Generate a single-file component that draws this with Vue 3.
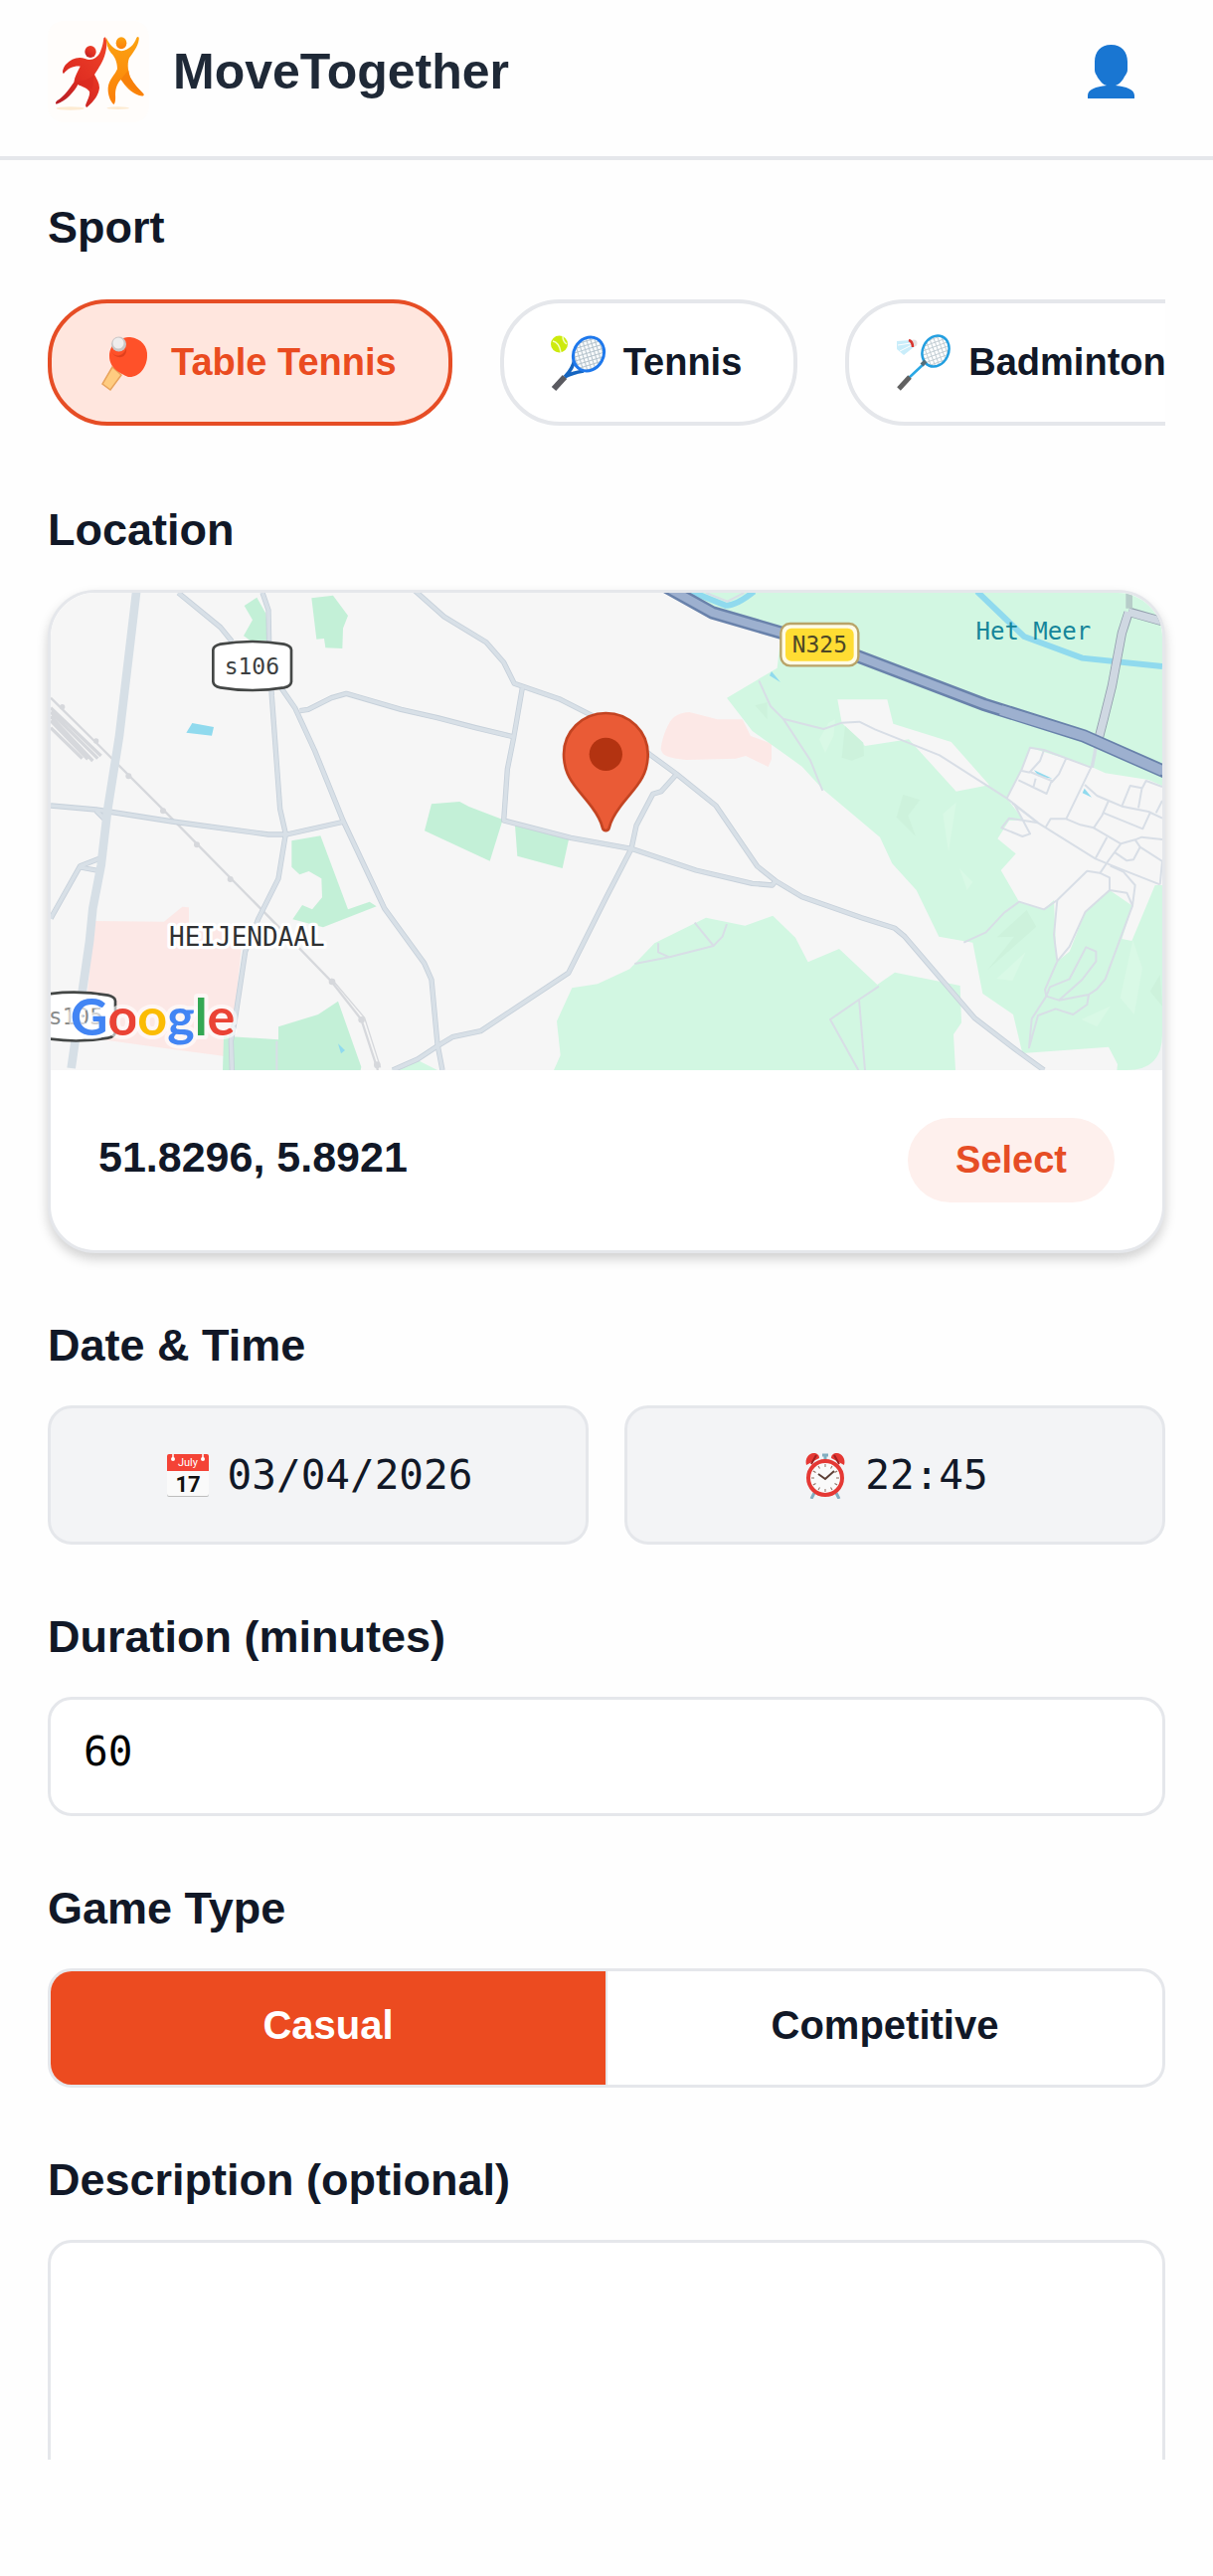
<script setup>
  import { ref } from 'vue'

  const sports = [
    { id: 'table-tennis', name: 'Table Tennis' },
    { id: 'tennis', name: 'Tennis' },
    { id: 'badminton', name: 'Badminton' }
  ]
  const gameTypes = ['Casual', 'Competitive']

  const sport = ref('table-tennis')
  const gameType = ref('Casual')
  const duration = ref('60')
  const description = ref('')
  const date = ref('03/04/2026')
  const time = ref('22:45')
  const coords = ref('51.8296, 5.8921')

  const clockTicks = [0, 30, 60, 90, 120, 150, 180, 210, 240, 270, 300, 330]
</script>

<template>
  <div class="app">
    <header class="header">
      <svg class="header__logo" viewBox="24 3 306 306" aria-hidden="true">
        <defs>
          <linearGradient id="logoRed" x1="1" y1="0" x2="0.2" y2="1">
            <stop offset="0" stop-color="#f0442a" />
            <stop offset="0.6" stop-color="#e02f22" />
            <stop offset="1" stop-color="#b91f25" />
          </linearGradient>
          <linearGradient id="logoOrange" x1="0" y1="0" x2="0" y2="1">
            <stop offset="0" stop-color="#fca311" />
            <stop offset="1" stop-color="#fb7f0a" />
          </linearGradient>
        </defs>
        <rect x="24" y="3" width="306" height="306" rx="48" fill="#fffdfb" />
        <ellipse cx="92" cy="267" rx="42" ry="5" fill="#fdebd2" />
        <ellipse cx="236" cy="266" rx="34" ry="4" fill="#fdebd2" />
        <ellipse cx="153" cy="96" rx="17" ry="18" fill="url(#logoRed)" />
        <path fill="url(#logoRed)" d="M197 52C204 60 203 80 198 100C192 125 178 145 165 165C172 178 180 190 180 205C178 225 165 245 143 263C138 264 137 258 140 252C146 238 152 225 150 216C142 205 125 200 115 195C105 215 80 245 50 254C46 252 48 248 52 244C75 230 90 205 103 188C105 170 115 155 122 140C105 138 85 145 72 162C66 160 70 145 78 135C95 117 115 110 137 117C155 125 175 115 183 95C190 80 192 65 193 55Z" />
        <ellipse cx="246" cy="70" rx="16" ry="18" fill="url(#logoOrange)" />
        <path fill="url(#logoOrange)" d="M200 52C208 72 222 90 246 94C270 90 285 75 292 54C296 48 301 52 299 60C296 82 280 100 270 115C262 135 268 160 274 175C285 195 300 210 314 224C316 230 308 230 300 228C275 220 258 200 245 180C235 190 228 205 228 225C229 240 228 252 223 255C212 245 205 225 206 205C208 180 228 165 234 148C234 125 225 110 215 100C205 88 200 70 200 52Z" />
        <path fill="#d92a20" opacity="0.6" d="M103 188C118 192 140 196 156 208C166 192 158 176 165 165C150 180 125 186 103 188Z" />
        <path fill="#f57c0a" opacity="0.7" d="M245 180C252 168 262 158 268 152C269 162 272 170 274 175C285 195 300 210 314 224C285 215 262 198 245 180Z" />
      </svg>
      <h1 class="header__title">MoveTogether</h1>
      <button class="header__user" type="button" aria-label="Profile">
        <svg class="header__user-icon" viewBox="0 0 47 54">
          <path fill="#1976d2" d="M23.5 0C34 0 40 7 40 17V25C40 29 37 31 36 34C33 38 31 40 28 41C39 42 47 45 47 51V54H0V51C0 45 8 42 19 41C15 40 13 37 10 33C9 30 7 29 7 25V17C7 7 13 0 23.5 0Z" />
        </svg>
      </button>
    </header>

    <main class="form">
      <section class="field">
        <h2 class="field__label">Sport</h2>
        <div class="chips">
          <button
            v-for="s in sports" :key="s.id"
            class="chip" :class="{ 'chip--active': sport === s.id }"
            type="button"
            :aria-pressed="sport === s.id"
            @click="sport = s.id"
            >
            <svg v-if="s.id === 'table-tennis'" class="chip__icon" viewBox="0 0 58 58" aria-hidden="true">
              <path d="M15 33L24 41L13 56L5 50Z" fill="#ffcc80" stroke="#e8a35c" stroke-width="1.5" />
              <path d="M31 43C22 39 12 34 12 22C12 10 22 3 33 3C44 4 51 13 50 22C50 33 42 44 31 43Z" fill="#ff5129" />
              <path d="M14 14C14 24 26 24 29 14C30 20 26 24 21 23C16 22 14 18 14 14Z" fill="#e0401d" />
              <circle cx="21.5" cy="10" r="7.5" fill="#c9c6c6" />
              <circle cx="21" cy="9" r="5.5" fill="#efeded" />
            </svg>
            <svg v-else-if="s.id === 'tennis'" class="chip__icon" viewBox="0 0 58 58" aria-hidden="true">
              <defs>
                <pattern id="strings" width="4" height="4" patternUnits="userSpaceOnUse" patternTransform="rotate(45)">
                  <path d="M0 0H4M0 0V4" stroke="#b5c3cc" stroke-width="2" />
                </pattern>
              </defs>
              <circle cx="9.5" cy="10" r="8.5" fill="#cdea0c" />
              <path d="M3 7C8 8 10 12 11 18M13 2C13 6 14 8 17 10" fill="none" stroke="#f4ffc0" stroke-width="1.5" />
              <path d="M25 24C24 32 20 38 15 43C22 39 28 38 34 37" fill="none" stroke="#1565c0" stroke-width="3.5" />
              <ellipse cx="39" cy="20" rx="15" ry="17.5" transform="rotate(28 39 20)" fill="#f8fafb" />
              <ellipse cx="39" cy="20" rx="15" ry="17.5" transform="rotate(28 39 20)" fill="url(#strings)" stroke="#1e78ec" stroke-width="3" />
              <path d="M15 43L4 55" stroke="#5a5a60" stroke-width="6" />
            </svg>
            <svg v-else class="chip__icon" viewBox="0 0 58 58" aria-hidden="true">
              <defs>
                <pattern id="badmintonStrings" width="4" height="4" patternUnits="userSpaceOnUse" patternTransform="rotate(45)">
                  <path d="M0 0H4M0 0V4" stroke="#c3ced4" stroke-width="2" />
                </pattern>
              </defs>
              <path d="M2 7L16 6L19 13L9 21L2 15Z" fill="#c9edfa" />
              <path d="M3 11L16 9M5 17L17 11" stroke="#fff" />
              <circle cx="19" cy="9" r="3.5" fill="#e4dfdf" />
              <path d="M14 6C17 7 18 10 18 13" fill="none" stroke="#d8352e" stroke-width="2.5" />
              <ellipse cx="41" cy="17" rx="13" ry="16" transform="rotate(25 41 17)" fill="url(#badmintonStrings)" stroke="#239fe0" stroke-width="2.5" />
              <path d="M29 30L14 44" stroke="#29a7e4" stroke-width="2.5" />
              <path d="M31 27L27 31" stroke="#546e7a" stroke-width="4" />
              <path d="M15 43L4 55" stroke="#616161" stroke-width="5" />
            </svg>
            <span>{{ s.name }}</span>
          </button>
        </div>
      </section>

      <section class="field">
        <h2 class="field__label">Location</h2>
        <div class="card">
          <svg class="map" viewBox="33 48 3354 1440" preserveAspectRatio="xMidYMid slice" role="img" aria-label="Map">
            <rect x="33" y="48" width="3354" height="1440" fill="#f6f6f6" />

            <!-- hospital and campus areas -->
            <g fill="#fce8e6">
              <path d="M165 1038L375 1040L430 995L450 997V1045L530 1060L610 1100L575 1448L400 1425L145 1390V1240Z" />
              <path d="M1960 408C1920 410 1905 430 1900 440C1885 465 1875 500 1874 520C1880 540 1890 545 1950 552L2100 548L2130 540L2198 573L2208 550V503L2145 480L2120 430H2045Z" />
            </g>

            <!-- parks -->
            <g fill="#c3f0d7">
              <path d="M655 62L617 87L642 130L615 178L635 192H690L682 110Z" />
              <path d="M820 64L885 56L930 117L915 155L913 216L862 214L858 186L835 188Z" />
              <path d="M760 796L847 781L930 1003L995 980L1016 994L855 1057L763 1033L792 990L822 1003L852 967L850 910L812 888L784 898L760 875Z" />
              <path d="M552 1488L555 1385L720 1396V1357L840 1320L900 1280L970 1478L968 1488Z" />
              <path d="M1182 685L1267 678L1295 693L1397 732L1358 857L1161 766Z" />
              <path d="M1434 750L1596 792L1577 879L1441 842Z" />
            </g>
            <g fill="#d2f7e2">
              <path d="M1060 1488L1145 1460L1200 1488Z" />
              <path d="M2010 1028L2128 1052L2212 1022L2280 1088L2318 1162L2412 1122L2527 1230L2580 1193L2777 1233L2781 1345L2757 1380L2763 1488H1551L1571 1443L1560 1340L1606 1240L1683 1228L1780 1183L1855 1105Z" />
              <path d="M1940 48L2235 185L2225 275L2073 365L2150 465L2300 572L2362 640L2535 785L2572 865L2645 945L2713 1085L2815 1103L2845 1257L2937 1320L2965 1437L3225 1418L3252 1470L3250 1488H3387V930H3365L3295 1098L3265 1092L3297 992L3228 945L3155 1010L3107 1130L3068 1162L3060 975L3030 1003L2955 980L2900 885L2945 835L2890 790L2925 735H2970L2918 668L2965 580L2988 515L3172 572L3215 592L3345 612L3387 630V48Z" />
            </g>
            <path fill="#f6f6f6" d="M2407 370H2557L2575 443L2750 498L2865 628L2765 647L2622 490L2490 510L2420 440Z" />
            <path fill="#f1f3f4" d="M3387 1380Q3387 1488 3280 1488H3387Z" />
            <g fill="#cdf2dc">
              <path d="M2430 450L2485 500L2487 540L2450 554L2420 545Z" />
              <path d="M2605 657L2656 673L2620 720L2643 782L2585 725Z" />
              <path d="M2978 1005L3007 1055L2860 1185L2940 1085L2888 1087Z" />
              <path d="M3380 1200L3387 1295L3350 1250Z" />
              <path d="M2158 388L2195 378V430Z" />
            </g>
            <g fill="#d9f9e6">
              <path d="M2765 680L2742 830L2725 715Z" />
              <path d="M2775 880L2815 920L2798 945Z" />
              <path d="M2975 1132L2935 1218L2887 1212Z" />
              <path d="M3298 1095L3327 1180L3302 1320L3260 1270Z" />
              <path d="M3230 1295L3190 1357L3142 1335Z" />
              <path d="M2380 440L2400 430L2395 480L2370 530L2352 490Z" />
            </g>

            <!-- water -->
            <g fill="#90daee">
              <path d="M460 441L525 453L519 479L442 470Z" />
              <path d="M900 1408L921 1428L909 1438Z" />
              <path d="M2208 285L2235 318L2202 298Z" />
              <path d="M3000 583L3055 608L3015 602Z" />
              <path d="M3152 638L3174 665L3146 652Z" />
            </g>
            <g fill="none" stroke="#90daee" stroke-width="18">
              <path d="M2828 44L2970 180L3145 245L3387 270" />
              <path d="M1965 44L2070 86Q2100 88 2155 44" />
            </g>

            <!-- railway -->
            <g fill="none" stroke="#d6d8dc" stroke-width="7">
              <path d="M33 365L180 510L380 710L720 1055L880 1220L970 1335L1020 1488" />
              <path d="M880 1212L980 1330L1028 1480" stroke-width="4" />
              <path d="M33 395L185 540M33 408L175 548M33 421L160 555M33 434L145 550M33 455L128 548" stroke-width="10" />
            </g>
            <g fill="#d6d8dc">
              <circle cx="68" cy="392" r="8" /><circle cx="170" cy="495" r="8" />
              <circle cx="268" cy="601" r="9" /><circle cx="372" cy="706" r="9" />
              <circle cx="474" cy="808" r="9" /><circle cx="575" cy="912" r="9" />
              <circle cx="882" cy="1221" r="10" /><circle cx="971" cy="1336" r="10" />
              <circle cx="1018" cy="1472" r="10" />
            </g>

            <!-- footpaths -->
            <g fill="none" stroke="#d8dee6" stroke-width="6" stroke-linejoin="round">
              <path d="M2170 313L2205 390L2243 428L2325 553L2362 645M2243 428L2365 459L2420 440L2473 437L2520 460L2715 538L2918 668L3012 742L3185 850L3245 875L3380 928" />
              <path d="M2918 668L2963 580L2988 515L3030 522L3172 575L3185 535M3030 522L3018 555L2988 588L3053 615L3038 654L2953 613M2963 585L2988 590M3005 608L2998 635M3097 547L3075 595L3053 620" />
              <path d="M3172 575L3097 730L3050 730L3035 755M3153 627L3190 660L3225 675L3265 692L3345 708L3387 728M3225 675L3205 720L3180 757L3140 748L3097 730M3210 712L3328 760L3350 712M3265 692L3290 630L3325 637M3315 697L3325 640L3338 615L3387 633M3368 712L3387 675" />
              <path d="M3180 757L3262 805L3305 793L3325 785L3387 792M3220 785L3185 850M3305 793L3320 815L3387 858M3245 832L3280 856L3300 853L3320 815M3262 805L3225 855L3198 895M3387 858L3380 928" />
              <path d="M2940 685L2988 775L2965 783L2902 757L2925 728L3012 742M2935 683L3012 742" />
              <path d="M2788 1103L2855 1072L2910 1013L2955 980L3030 1003L3070 975L3160 887L3198 893L3228 907V945L3280 953L3297 992L3305 930L3270 890L3230 872" />
              <path d="M3070 975L3060 1080L3070 1160L3107 1115L3155 1010L3228 945M3297 992L3215 1213L3190 1243L3165 1260L3075 1277L3037 1265L3033 1245L3070 1160" />
              <path d="M3075 1277L3145 1215L3187 1160V1130L3157 1117L3107 1213L3048 1237L3037 1265L2993 1333L2985 1420L3012 1323L3065 1303L3118 1320L3160 1290L3165 1260" />
              <path d="M2532 1235L2472 1275L2385 1335L2470 1488M2472 1275L2490 1488" />
              <path d="M1795 1167L1900 1147L2033 1113L1976 1043M2033 1113L2060 1085L2073 1047M1900 1147L1866 1132V1105M715 1400V1488" />
              <path d="M2010 48L2075 74L2125 48" />
            </g>

            <!-- streets: casing first, then fill -->
            <g
              v-for="layer in ['casing', 'fill']" :key="layer"
              class="street" :class="'street--' + layer"
              >
              <path d="M418 48L545 152L580 195M725 330L770 395L830 525L915 735L1040 1000L1160 1165L1182 1215L1200 1410L1215 1488" />
              <path d="M672 48L690 100L692 200L700 360L725 700L742 775L720 910L660 1030L620 1130L590 1330L577 1400L580 1488" />
              <path d="M33 690L170 702L400 738L690 777H745L920 738" />
              <path d="M785 404L810 400L880 365L925 352L1090 400L1200 425L1315 455L1432 483" />
              <path d="M1130 40L1220 120L1347 197L1400 258L1432 322L1567 368L1660 415L1840 535L1922 595L2040 690L2165 873L2220 917L2300 965L2480 1028L2580 1060L2610 1085L2820 1330L2950 1430L3030 1488" />
              <path d="M1456 335L1430 485L1411 580L1400 735L1602 787L1785 820L1980 885L2150 925L2210 930L2222 915" />
              <path d="M1922 595L1875 647L1850 655L1800 750L1785 820L1710 965L1595 1195L1330 1370L1245 1388L1200 1415L1140 1455L1065 1488" />
              <path d="M33 1030L122 872L180 850M122 876L170 885M170 705L200 735" />
            </g>
            <path d="M292 40L240 480L205 700L185 870L160 1000L150 1100L95 1482" fill="none" stroke="#d6dfe6" stroke-width="26" />

            <!-- N325 and its exit -->
            <g fill="none">
              <path d="M3285 105L3400 138M3285 108L3265 170L3235 330L3210 430L3192 500" stroke="#919dac" stroke-width="28" />
              <path d="M3285 106L3400 138M3285 106L3265 170L3235 330L3210 430L3192 500" stroke="#cfd8e2" stroke-width="23" />
              <path d="M3287 40V95" stroke="#b7cdc9" stroke-width="20" />
              <path d="M3187 510L3175 575" stroke="#d6dfe6" stroke-width="10" />
              <path d="M1890 30L2030 108L2260 175L2470 240L2850 385L3150 480L3400 590" stroke="#6982ab" stroke-width="40" />
              <path d="M1890 30L2030 108L2260 175L2470 240L2850 385L3150 480L3400 590" stroke="#9db0cf" stroke-width="25" />
              <path d="M2900 402L3150 480L3387 585" stroke="#9db0cf" stroke-width="30" />
            </g>

            <!-- road shields -->
            <path d="M545 203Q640 187 737 203Q758 208 759 220V316Q758 330 737 334Q640 350 545 334Q524 330 523 316V220Q524 208 545 203Z" fill="#fff" stroke="#444746" stroke-width="8" />
            <text class="map__shield" x="640" y="293">s106</text>
            <path d="M14 1260Q109 1245 206 1262Q227 1267 228 1279V1372Q227 1387 206 1391Q109 1408 14 1391Q-7 1387 -8 1372V1279Q-7 1266 14 1260Z" fill="#fff" stroke="#444746" stroke-width="8" />
            <text class="map__shield map__shield--faded" x="109" y="1350">s105</text>
            <rect x="2236" y="141" width="234" height="127" rx="28" fill="#fffbe6" stroke="#b9a468" stroke-width="7" />
            <rect x="2250" y="155" width="206" height="99" rx="18" fill="#ffdd33" />
            <text class="map__shield map__shield--road" x="2353" y="229">N325</text>

            <text class="map__area" x="625" y="1112">HEIJENDAAL</text>
            <text class="map__water" x="2998" y="190">Het Meer</text>
            <text class="map__brand" x="92" y="1383"><tspan fill="#4285f4">G</tspan><tspan fill="#ea4335">o</tspan><tspan fill="#fbbc04">o</tspan><tspan fill="#4285f4">g</tspan><tspan fill="#34a853">l</tspan><tspan fill="#ea4335">e</tspan></text>

            <g transform="translate(1140 0)">
              <path d="M568 411C640 411 695 468 695 535C695 610 650 640 610 695C590 722 583 735 578 757C575 768 561 768 558 757C553 735 546 722 526 695C486 640 441 610 441 535C441 468 496 411 568 411Z" fill="#ea5b36" stroke="#c34422" stroke-width="8" />
              <circle cx="568" cy="535" r="50" fill="#b33311" />
            </g>
          </svg>
          <div class="card__info">
            <span class="card__coords">{{ coords }}</span>
            <button class="card__select" type="button">Select</button>
          </div>
        </div>
      </section>

      <section class="field">
        <h2 class="field__label">Date &amp; Time</h2>
        <div class="pickers">
          <button class="picker" type="button">
            <svg class="picker__icon" viewBox="0 0 48 48" aria-hidden="true">
              <rect x="3" y="4" width="42" height="42" rx="2" fill="#bdbdbd" />
              <rect x="3" y="3" width="42" height="42" rx="2" fill="#fafafa" />
              <path d="M3 20V5Q3 3 5 3H43Q45 3 45 5V20Z" fill="#f44336" />
              <circle cx="9" cy="8" r="2" fill="#fff" /><circle cx="39" cy="8" r="2" fill="#fff" />
              <path d="M9 3V7M39 3V7" stroke="#fff" stroke-width="1.5" />
              <text class="picker__month" x="24" y="15">July</text>
              <text class="picker__day" x="24" y="41">17</text>
            </svg>
            <span>{{ date }}</span>
          </button>
          <button class="picker" type="button">
            <svg class="picker__icon" viewBox="0 0 48 48" aria-hidden="true">
              <path d="M13 42L10 48M35 42L38 48" stroke="#82aec0" stroke-width="3" />
              <path d="M24 3V9M21 4H27" stroke="#82aec0" stroke-width="3" />
              <path d="M5 14C3 7 8 2 12 2C16 2 18 4 18 7ZM43 14C45 7 40 2 36 2C32 2 30 4 30 7Z" fill="#e53935" />
              <path d="M10 13L15 4M38 13L33 4" stroke="#a32020" stroke-width="2" />
              <circle cx="24" cy="27" r="17" fill="#fafafa" stroke="#e53935" stroke-width="4" />
              <path
                v-for="t in clockTicks" :key="t"
                d="M24 13V16" stroke="#8d6e63" stroke-width="1"
                :transform="'rotate(' + t + ' 24 27)'"
                />
              <path d="M17 23L24 28L33 20" fill="none" stroke="#5d4037" stroke-width="2" />
            </svg>
            <span>{{ time }}</span>
          </button>
        </div>
      </section>

      <div class="field">
        <label class="field__label" for="duration">Duration (minutes)</label>
        <input id="duration" v-model="duration" class="input" type="text" inputmode="numeric">
      </div>

      <section class="field">
        <h2 class="field__label">Game Type</h2>
        <div class="segment">
          <button
            v-for="g in gameTypes" :key="g"
            class="segment__item" :class="{ 'segment__item--active': gameType === g }"
            type="button"
            :aria-pressed="gameType === g"
            @click="gameType = g"
            >
            {{ g }}
          </button>
        </div>
      </section>

      <div class="field">
        <label class="field__label" for="description">Description (optional)</label>
        <textarea id="description" v-model="description" class="input input--area"></textarea>
      </div>
    </main>
  </div>
</template>

<style>
  body {
    margin: 0;
    background-color: #fefefe;
  }
</style>

<style scoped>
  .app {
    height: 100vh;
    box-sizing: border-box;
    padding-bottom: 117px;
    display: flex;
    flex-direction: column;
    background-color: #fefefe;
    color: #111827;
    font-family: "Liberation Sans", Arial, sans-serif;
  }

  button {
    font-family: inherit;
    cursor: pointer;
  }

  .header {
    flex: none;
    display: flex;
    align-items: center;
    gap: 24px;
    padding: 21px 48px 34px;
    border-bottom: 4px solid #e5e7eb;
  }

  .header__logo {
    width: 102px;
    height: 102px;
  }

  .header__title {
    flex: 1;
    margin: 0;
    font-size: 50px;
    line-height: 60px;
    color: #1f2937;
  }

  .header__user {
    width: 110px;
    height: 102px;
    padding: 0;
    border: 0;
    background: none;
    display: flex;
    align-items: center;
    justify-content: center;
  }

  .header__user-icon {
    width: 47px;
    height: 54px;
  }

  .form {
    flex: 1;
    min-height: 0;
    overflow-y: auto;
    scrollbar-width: none;
    padding: 38px 48px 0;
    display: flex;
    flex-direction: column;
    gap: 63px;
  }

  .field {
    flex: none;
    min-width: 0;
    display: flex;
    flex-direction: column;
    gap: 30px;
  }

  .field__label {
    margin: 0;
    font-size: 45px;
    font-weight: 700;
    line-height: 60px;
  }

  .chips {
    display: flex;
    gap: 48px;
    padding: 12px 0;
    overflow-x: auto;
    scrollbar-width: none;
  }

  .chip {
    flex: none;
    height: 127px;
    padding: 0 52px 0 46px;
    border: 4px solid #e5e7eb;
    border-radius: 60px;
    background-color: #fff;
    color: #111827;
    font-size: 38px;
    font-weight: 700;
    display: flex;
    align-items: center;
    gap: 16px;
  }

  .chip--active {
    background-color: #ffe6de;
    border-color: #e64d25;
    color: #ea4b20;
  }

  .chip__icon {
    width: 58px;
    height: 58px;
  }

  .card {
    border: 3px solid #e5e7eb;
    border-radius: 48px;
    overflow: hidden;
    background-color: #fff;
    box-shadow: 0 6px 12px rgba(0, 0, 0, 0.18);
  }

  .map {
    display: block;
    width: 100%;
    height: 480px;
  }

  .street {
    fill: none;
    stroke-linejoin: round;
  }

  .street--casing {
    stroke: #c6d0da;
    stroke-width: 16px;
  }

  .street--fill {
    stroke: #d8e0e7;
    stroke-width: 11px;
  }

  .map text {
    font-family: "DejaVu Sans Mono", monospace;
    text-anchor: middle;
  }

  .map .map__shield {
    font-size: 69px;
    fill: #3c3f41;
  }

  .map .map__shield--faded {
    opacity: 0.6;
  }

  .map .map__shield--road {
    fill: #4d4726;
  }

  .map .map__area {
    font-size: 78px;
    fill: #2f3133;
    stroke: #fff;
    stroke-width: 20px;
    stroke-linejoin: round;
    paint-order: stroke;
  }

  .map .map__water {
    font-size: 72px;
    fill: #15859a;
  }

  .map .map__brand {
    font-family: Lato, sans-serif;
    font-size: 156px;
    font-weight: 700;
    text-anchor: start;
    stroke: rgba(255, 255, 255, 0.6);
    stroke-width: 24px;
    stroke-linejoin: round;
    paint-order: stroke;
  }

  .card__info {
    display: flex;
    align-items: center;
    justify-content: space-between;
    padding: 48px;
  }

  .card__coords {
    font-size: 43px;
    font-weight: 700;
    line-height: 60px;
    padding-bottom: 8px;
  }

  .card__select {
    height: 85px;
    padding: 0 48px;
    border: 0;
    border-radius: 43px;
    background-color: #fef0ed;
    color: #e64d25;
    font-size: 38px;
    font-weight: 700;
  }

  .pickers {
    display: grid;
    grid-template-columns: 1fr 1fr;
    gap: 36px;
  }

  .picker {
    height: 140px;
    padding: 0;
    border: 3px solid #e5e7eb;
    border-radius: 24px;
    background-color: #f3f4f6;
    color: #111827;
    font-family: "DejaVu Sans Mono", monospace;
    font-size: 41px;
    display: flex;
    align-items: center;
    justify-content: center;
    gap: 16px;
  }

  .picker__icon {
    width: 48px;
    height: 48px;
  }

  .picker__month,
  .picker__day {
    font-family: Roboto, sans-serif;
    text-anchor: middle;
  }

  .picker__month {
    font-size: 11px;
    fill: #fff;
  }

  .picker__day {
    font-size: 22px;
    font-weight: 700;
    fill: #111;
  }

  .input {
    width: 100%;
    height: 120px;
    box-sizing: border-box;
    padding: 0 33px 10px;
    border: 3px solid #e5e7eb;
    border-radius: 24px;
    outline: 0;
    background-color: #fff;
    color: #000;
    font-family: "DejaVu Sans Mono", monospace;
    font-size: 41px;
  }

  .input--area {
    display: block;
    height: 300px;
    padding: 33px;
    resize: none;
  }

  .segment {
    display: flex;
    height: 120px;
    box-sizing: border-box;
    border: 3px solid #e5e7eb;
    border-radius: 24px;
    overflow: hidden;
    background-color: #fff;
  }

  .segment__item {
    flex: 1;
    padding: 0 0 5px;
    border: 0;
    background: none;
    color: #111827;
    font-size: 40px;
    font-weight: 700;
  }

  .segment__item + .segment__item {
    border-left: 2px solid #e5e7eb;
  }

  .segment__item--active {
    background-color: #ec4b20;
    color: #fff;
  }
</style>
